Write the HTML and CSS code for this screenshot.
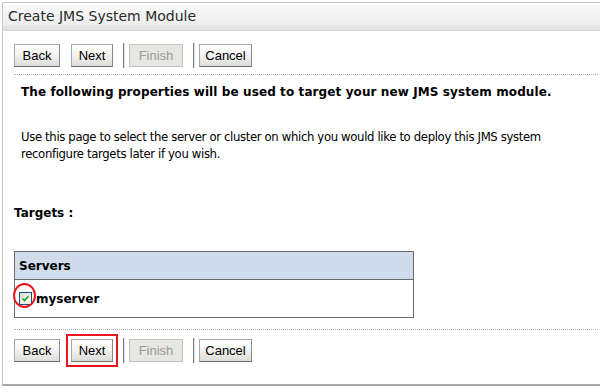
FILE: index.html
```html
<!DOCTYPE html>
<html lang="en">
<head>
  <meta charset="UTF-8"/>
  <title>Create JMS System Module</title>
  <link rel="stylesheet" href="styles.css">
</head>
<body>
  <div class="panel">
    <div class="panel-title">Create JMS System Module</div>

    <div class="panel-body">
      <div class="button-bar">
        <button class="btn back">Back</button>
        <button class="btn next">Next</button>
        <span class="sep"></span>
        <button class="btn finish" disabled>Finish</button>
        <span class="sep"></span>
        <button class="btn cancel">Cancel</button>
      </div>

      <div class="intro">
        <p class="lead">The following properties will be used to target your new JMS system module.</p>
        <p class="help">Use this page to select the server or cluster on which you would like to deploy this JMS system<br>reconfigure targets later if you wish.</p>
      </div>

      <h3 class="targets-label">Targets :</h3>

      <table class="target-table">
        <tr><th>Servers</th></tr>
        <tr>
          <td>
            <label class="server">
              <span class="checkbox">
                <svg viewBox="0 0 11 11"><path d="M2 5.5 L4.3 8 L9 2.8" /></svg>
              </span>
              <span class="circle-mark"></span>
              myserver
            </label>
          </td>
        </tr>
      </table>

      <div class="button-bar bottom">
        <button class="btn back">Back</button>
        <button class="btn next highlighted">Next</button>
        <span class="sep"></span>
        <button class="btn finish" disabled>Finish</button>
        <span class="sep"></span>
        <button class="btn cancel">Cancel</button>
      </div>
    </div>
  </div>
</body>
</html>
```

FILE: styles.css
```css
* {
  margin: 0;
  padding: 0;
  box-sizing: border-box;
}

body {
  background: #fff;
  font-family: "DejaVu Sans", Verdana, sans-serif;
  color: #000;
  overflow: hidden;
}

.panel {
  margin: 2px 0 0 2px;
  width: 700px;
  height: 384px;
  border-left: 1px solid #c8c8c8;
  border-top: 1px solid #c2c6ca;
  border-bottom: 2px solid #a8a8a8;
  box-shadow: 0 2px 0 #dcdcdc;
}

.panel-title {
  height: 28px;
  padding: 5px 0 0 5px;
  font-size: 14px;
  color: #2a2a2a;
  background: linear-gradient(#fbfbfb, #e9eaea);
  border-bottom: 1px solid #d6d6d6;
  box-shadow: inset 0 -4px 0 #e4e4e4;
}

.panel-body {
  padding: 0 0 0 11px;
}

.button-bar {
  display: flex;
  align-items: center;
  padding: 12px 0 6px;
  border-bottom: 1px dotted #b4b4b4;
  width: 584px;
}

.button-bar.bottom {
  margin-top: 11px;
  padding: 8px 0 0;
  border-bottom: none;
  border-top: 1px dotted #b4b4b4;
}

.btn {
  height: 23px;
  padding: 0;
  font-family: "Liberation Sans", Arial, sans-serif;
  font-size: 13px;
  color: #000;
  background: linear-gradient(#ffffff, #f3f3f1 45%, #dcdcd8);
  border: 1px solid #8a8a8a;
  border-top-color: #a8a8a8;
  border-left-color: #a8a8a8;
  border-bottom-color: #6e6e6e;
}

.btn.back {
  width: 46px;
  margin-right: 11px;
}

.btn.next {
  width: 42px;
  margin-right: 10px;
}

.btn.finish {
  width: 54px;
  margin-right: 10px;
}

.btn.cancel {
  width: 53px;
}

.btn:disabled {
  color: #9a9a9a;
  background: #e6e6e2;
  border-color: #c2c2c0;
}

.btn.highlighted {
  outline: 2px solid #e8141c;
  outline-offset: 3px;
}

.sep {
  width: 2px;
  height: 25px;
  margin-right: 4px;
  background: #808080;
  border-right: 1px solid #e0e0e0;
}

.intro {
  padding-left: 7px;
}

.lead {
  margin-top: 9px;
  font-size: 12px;
  font-weight: bold;
  line-height: 16px;
  letter-spacing: 0.1px;
}

.help {
  margin-top: 29px;
  font-size: 11.7px;
  line-height: 17px;
  letter-spacing: -0.36px;
  white-space: nowrap;
}

.targets-label {
  margin-top: 42px;
  font-size: 12px;
  font-weight: bold;
  line-height: 16px;
}

.target-table {
  margin-top: 30px;
  width: 400px;
  border-collapse: collapse;
  border: 1px solid #6a6a6a;
  font-size: 12px;
}

.target-table th {
  height: 28px;
  padding: 0 4px;
  text-align: left;
  background: #d0dcec;
  border-bottom: 1px solid #6a6a6a;
}

.target-table td {
  height: 38px;
  padding: 0 4px;
}

.server {
  position: relative;
  display: flex;
  align-items: center;
  gap: 4px;
  font-weight: bold;
}

.checkbox {
  width: 13px;
  height: 13px;
  border: 1px solid #1c5180;
  background: linear-gradient(135deg, #dcdcd6, #fbfbf9);
  display: flex;
  align-items: center;
  justify-content: center;
}

.checkbox svg {
  width: 9px;
  height: 9px;
  fill: none;
  stroke: #21a121;
  stroke-width: 2;
}

.circle-mark {
  position: absolute;
  left: -6px;
  top: -9px;
  width: 23px;
  height: 25px;
  border: 2px solid #e8141c;
  border-radius: 50%;
}
```
